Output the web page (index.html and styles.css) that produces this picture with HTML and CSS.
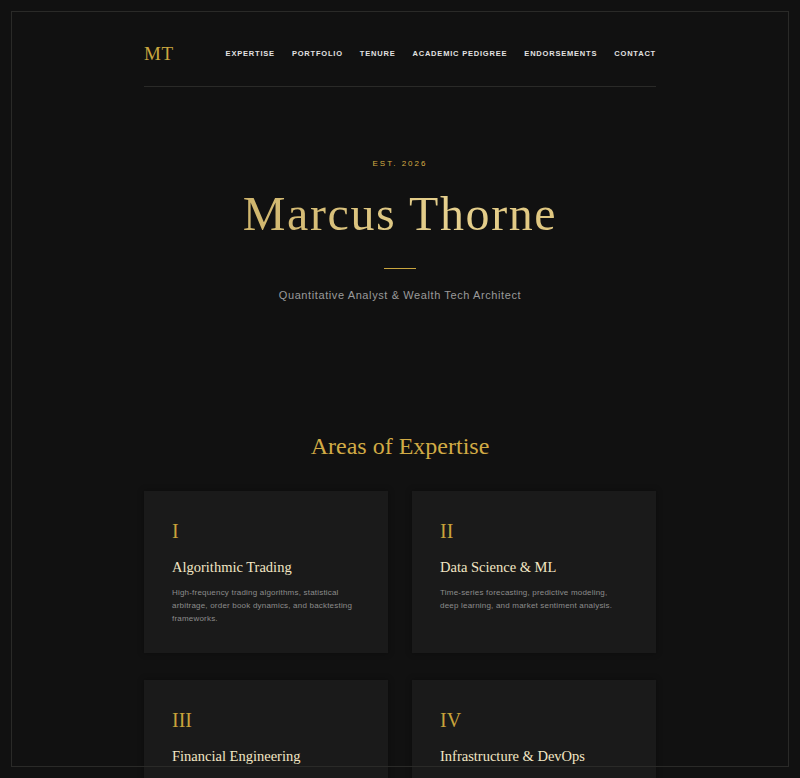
FILE: index.html
```html
<!DOCTYPE html>
<html lang="en">
<head>
<meta charset="utf-8">
<title>Marcus Thorne</title>
<link rel="stylesheet" href="styles.css">
</head>
<body>
<div class="frame"></div>
<div class="container">
  <header class="header">
    <div class="logo">MT</div>
    <nav class="nav">
      <a href="#expertise">Expertise</a>
      <a href="#portfolio">Portfolio</a>
      <a href="#tenure">Tenure</a>
      <a href="#academic">Academic Pedigree</a>
      <a href="#endorsements">Endorsements</a>
      <a href="#contact">Contact</a>
    </nav>
  </header>

  <section class="hero">
    <div class="est">Est. 2026</div>
    <h1 class="name">Marcus Thorne</h1>
    <div class="rule"></div>
    <p class="tagline">Quantitative Analyst &amp; Wealth Tech Architect</p>
  </section>

  <section class="expertise" id="expertise">
    <h2 class="section-title">Areas of Expertise</h2>
    <div class="cards">
      <div class="card">
        <div class="numeral">I</div>
        <h3 class="card-title">Algorithmic Trading</h3>
        <p class="card-text">High-frequency trading algorithms, statistical arbitrage, order book dynamics, and backtesting frameworks.</p>
      </div>
      <div class="card">
        <div class="numeral">II</div>
        <h3 class="card-title">Data Science &amp; ML</h3>
        <p class="card-text">Time-series forecasting, predictive modeling, deep learning, and market sentiment analysis.</p>
      </div>
      <div class="card">
        <div class="numeral">III</div>
        <h3 class="card-title">Financial Engineering</h3>
        <p class="card-text">Derivatives pricing, risk modeling, portfolio optimization, and stochastic calculus applications.</p>
      </div>
      <div class="card">
        <div class="numeral">IV</div>
        <h3 class="card-title">Infrastructure &amp; DevOps</h3>
        <p class="card-text">Low-latency systems, distributed computing, cloud architecture, and real-time data pipelines.</p>
      </div>
    </div>
  </section>
</div>
</body>
</html>
```

FILE: styles.css
```css
html, body {
  margin: 0;
  padding: 0;
  background: #111111;
}

body {
  font-family: "Liberation Sans", Arial, sans-serif;
  color: #e0e0e0;
}

.frame {
  position: fixed;
  top: 11px;
  left: 11px;
  right: 11px;
  bottom: 11px;
  border: 1px solid #2a2a28;
  pointer-events: none;
  z-index: 10;
}

.container {
  width: 512px;
  margin: 0 auto;
}

.header {
  display: flex;
  align-items: center;
  justify-content: space-between;
  padding: 43px 0 21px;
  border-bottom: 1px solid #2a2a28;
}

.logo {
  font-family: "Liberation Serif", "Times New Roman", serif;
  font-size: 19px;
  line-height: 22px;
  color: #c9a63f;
  letter-spacing: 0.5px;
}

.nav {
  display: flex;
  gap: 17px;
}

.nav a {
  font-size: 7.5px;
  font-weight: bold;
  letter-spacing: 0.8px;
  text-transform: uppercase;
  color: #e2e2e2;
  text-decoration: none;
  line-height: 12px;
}

.hero {
  text-align: center;
  padding-top: 71px;
}

.est {
  font-size: 8px;
  line-height: 12px;
  letter-spacing: 2px;
  text-transform: uppercase;
  color: #d6ad45;
}

.name {
  margin: 18px 0 0;
  font-family: "Liberation Serif", "Times New Roman", serif;
  font-weight: normal;
  font-size: 48px;
  line-height: 1.1;
  letter-spacing: 1.6px;
  background: linear-gradient(90deg, #c4a85c 0%, #e6d08e 60%, #d9bd72 100%);
  -webkit-background-clip: text;
  background-clip: text;
  color: transparent;
}

.rule {
  width: 32px;
  height: 1px;
  background: #c9a63f;
  margin: 27px auto 0;
}

.tagline {
  margin: 18px 0 0;
  font-size: 11px;
  line-height: 16px;
  letter-spacing: 0.6px;
  color: #9a9a9a;
}

.expertise {
  padding-top: 129px;
}

.section-title {
  margin: 0 0 30px;
  text-align: center;
  font-family: "Liberation Serif", "Times New Roman", serif;
  font-weight: normal;
  font-size: 24px;
  line-height: 29px;
  color: #d1ab45;
}

.cards {
  display: grid;
  grid-template-columns: 1fr 1fr;
  gap: 27px 24px;
}

.card {
  background: #1a1a1a;
  padding: 28px 28px;
  box-shadow: 0 0 6px rgba(0, 0, 0, 0.35);
}

.numeral {
  font-family: "Liberation Serif", "Times New Roman", serif;
  font-size: 20px;
  line-height: 24px;
  color: #c9a33a;
}

.card-title {
  margin: 15px 0 0;
  font-family: "Liberation Serif", "Times New Roman", serif;
  font-weight: normal;
  font-size: 14.5px;
  line-height: 18px;
  color: #f2e6c4;
}

.card-text {
  margin: 10px 0 0;
  font-size: 8px;
  line-height: 13px;
  letter-spacing: 0.2px;
  color: #8c8c8c;
}
```
